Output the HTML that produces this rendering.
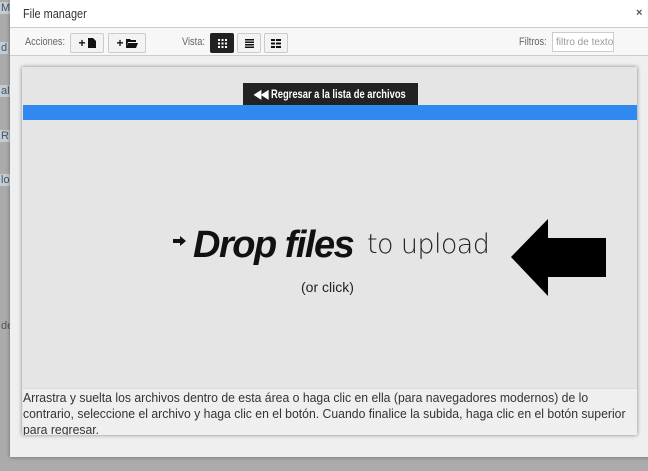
<!DOCTYPE html>
<html><head><meta charset="utf-8"><style>
*{box-sizing:border-box;margin:0;padding:0}
body{width:648px;height:471px;overflow:hidden;background:#ababab;font-family:"Liberation Sans",sans-serif;position:relative}
.frag{position:absolute;left:0;font-size:11px;color:#456;background:#c4ccd4;padding:0 1px}
.modal{position:absolute;left:10px;top:0;width:650px;height:457px;background:#efefef;box-shadow:0 0 4px rgba(0,0,0,.4)}
.cn{display:inline-block;transform:scaleX(.84);transform-origin:left center;white-space:nowrap}
.hdr{height:28px;background:#fff;border-bottom:1px solid #ccc;font-size:12px;color:#333;padding:6px 0 0 13px}
.x{position:absolute;left:626px;top:7px;font-size:11px;color:#555;font-weight:bold}
.tb{height:28px;background:#f7f7f7;border-bottom:1px solid #ccc;position:relative;font-size:11px;color:#666}
.tb span,.tb .b,.tb input{position:absolute}
.b{top:5px;height:20px;border:1px solid #ccc;background:#f3f3f3;border-radius:2px;display:flex;align-items:center;justify-content:center;gap:2px;font-weight:bold;font-size:12px;color:#111}
.b.on{background:#222;border-color:#222}
.panel{position:absolute;left:12px;top:67px;width:615px;height:368px;background:#e5e5e5;box-shadow:0 0 4px rgba(0,0,0,.45)}
.btn{position:absolute;left:221px;top:16px;width:175px;height:22px;background:#222;color:#fff;font-size:12px;font-weight:bold;line-height:22px;padding-left:11px}
.blue{position:absolute;left:1px;top:38px;width:614px;height:15px;background:#2f89f0}
.drop{position:absolute;left:171px;top:157px;font-size:38px;font-style:italic;font-weight:bold;color:#111;letter-spacing:-1.5px}
.up{position:absolute;left:345px;top:162px;font-size:27px;color:#222;font-family:"DejaVu Sans",sans-serif;font-weight:200;letter-spacing:-0.6px}
.or{position:absolute;left:279px;top:212px;font-size:14px;color:#222}
.help{position:absolute;left:1px;top:321px;width:614px;height:47px;background:#efefef;border-top:1px solid #ddd;color:#333;overflow:hidden}
.help div{width:660px;font-size:13px;line-height:16px;transform:scaleX(.94);transform-origin:left top;padding-top:1px;white-space:nowrap}
</style></head><body>
<div class="frag" style="top:2px">M</div>
<div class="frag" style="top:42px">d</div>
<div class="frag" style="top:85px">al</div>
<div class="frag" style="top:130px">RL</div>
<div class="frag" style="top:174px">lo</div>
<div class="frag" style="top:320px;background:none;color:#555">de</div>
<div class="modal">
 <div class="hdr"><span class="cn" style="font-size:13px">File manager</span></div><div class="x">×</div>
 <div class="tb">
  <span style="left:15px;top:8px" class="cn">Acciones:</span>
  <div class="b" style="left:60px;width:34px">+<svg width="8" height="10"><path d="M0 0h5l3 3v7H0z" fill="#111"/></svg></div>
  <div class="b" style="left:98px;width:38px">+<svg width="12" height="9"><path d="M0 0h4l1 1h5v2H2L0 9z M2 4h10l-2 5H0z" fill="#111"/></svg></div>
  <span style="left:172px;top:8px" class="cn">Vista:</span>
  <div class="b on" style="left:200px;width:24px"><svg width="9" height="9" fill="#fff"><rect x="0" y="0" width="2" height="2"/><rect x="3.5" y="0" width="2" height="2"/><rect x="7" y="0" width="2" height="2"/><rect x="0" y="3.5" width="2" height="2"/><rect x="3.5" y="3.5" width="2" height="2"/><rect x="7" y="3.5" width="2" height="2"/><rect x="0" y="7" width="2" height="2"/><rect x="3.5" y="7" width="2" height="2"/><rect x="7" y="7" width="2" height="2"/></svg></div>
  <div class="b" style="left:227px;width:24px"><svg width="9" height="9" fill="#111"><rect y="0" width="9" height="1.5"/><rect y="2.5" width="9" height="1.5"/><rect y="5" width="9" height="1.5"/><rect y="7.5" width="9" height="1.5"/></svg></div>
  <div class="b" style="left:254px;width:24px"><svg width="10" height="9" fill="#111"><rect width="4" height="2"/><rect x="5" width="5" height="2"/><rect y="3.5" width="4" height="2"/><rect x="5" y="3.5" width="5" height="2"/><rect y="7" width="4" height="2"/><rect x="5" y="7" width="5" height="2"/></svg></div>
  <span style="left:509px;top:8px" class="cn">Filtros:</span>
  <input style="left:542px;top:4px;width:62px;height:20px;border:1px solid #ccc;font-size:10px;padding-left:3px;color:#999;font-family:'Liberation Sans',sans-serif" value="filtro de texto">
 </div>
 <div class="panel">
  <div class="btn"><span class="cn" style="transform:scaleX(.78)">◀◀ Regresar a la lista de archivos</span></div>
  <div class="blue"></div>
  <svg style="position:absolute;left:151px;top:169px" width="14" height="10"><path d="M0 3h7V0l6 5-6 5V7H0z" fill="#111"/></svg>
  <div class="drop">Drop files</div>
  <div class="up">to upload</div>
  <div class="or">(or click)</div>
  <svg style="position:absolute;left:488px;top:152px" width="100" height="77"><path d="M1 38 L38 0 V19 H96 V58 H38 V77 Z" fill="#000"/></svg>
  <div class="help"><div>Arrastra y suelta los archivos dentro de esta área o haga clic en ella (para navegadores modernos) de lo<br>contrario, seleccione el archivo y haga clic en el botón. Cuando finalice la subida, haga clic en el botón superior<br>para regresar.</div></div>
 </div>
</div>
</body></html>
